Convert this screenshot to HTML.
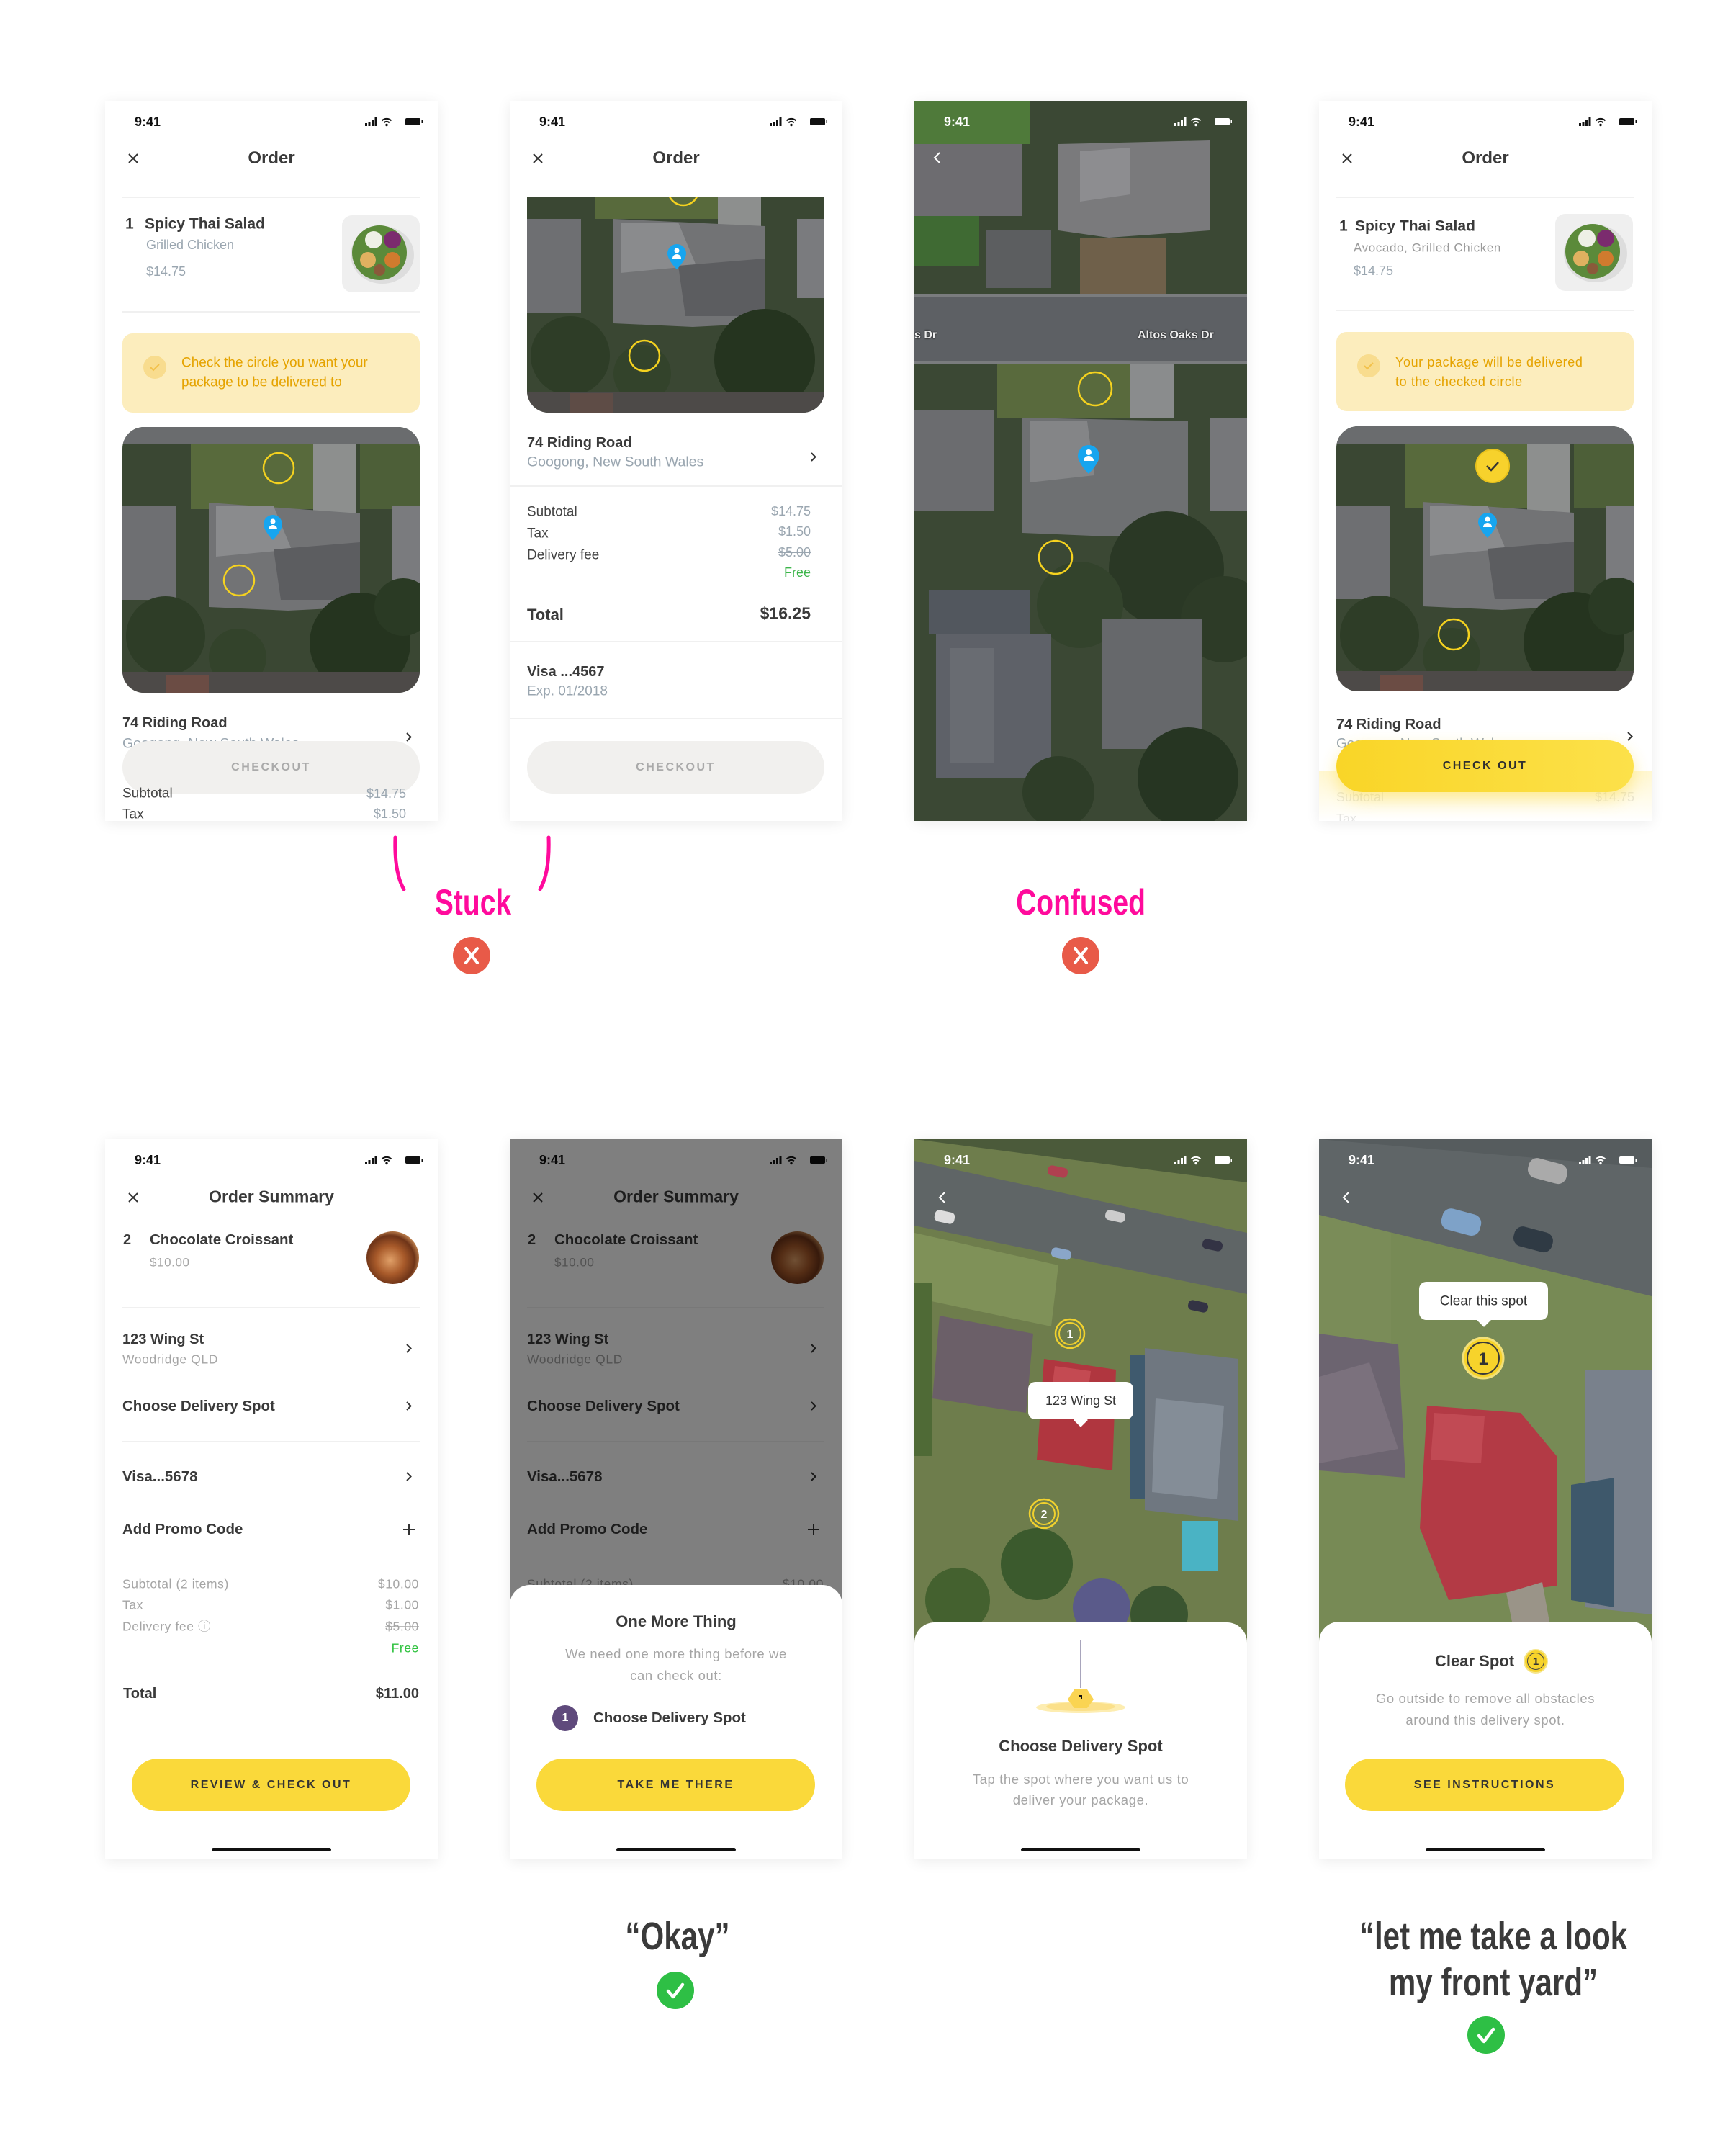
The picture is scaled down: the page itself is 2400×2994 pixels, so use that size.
<!DOCTYPE html>
<html><head><meta charset="utf-8">
<style>
*{margin:0;padding:0;box-sizing:border-box}
body{width:2400px;height:2994px;background:#fff;position:relative;overflow:hidden;font-family:"Liberation Sans",sans-serif;color:#333}
.ph{position:absolute;width:462px;height:1000px;background:#fff;overflow:hidden;box-shadow:0 3px 18px rgba(0,0,0,.08)}
.t{position:absolute;white-space:nowrap;transform:translateY(-50%);line-height:1}
.c{left:0;right:0;text-align:center}
.b{font-weight:bold}
.g2{letter-spacing:.6px}
.sep{position:absolute;height:2px;background:#f0f0f0}
.btn{position:absolute;border-radius:40px;display:flex;align-items:center;justify-content:center;font-weight:bold;letter-spacing:2.5px;font-size:16px}
.home{position:absolute;left:148px;width:166px;height:5px;border-radius:3px;background:#111;top:984px}
.abs{position:absolute}
.cap{position:absolute;font-weight:bold;white-space:nowrap;transform:translateX(-50%) scaleX(.78);line-height:1}
</style></head><body>

<!-- ============ PHONE 1 ============ -->
<div class="ph" style="left:146px;top:140px">
 <div class="t b" style="left:41px;top:29px;font-size:18px;color:#111">9:41</div>
 <svg class="abs" style="left:361px;top:21px" width="84" height="16" viewBox="0 0 84 16"><g fill="#111"><rect x="0" y="10" width="3" height="4"/><rect x="4.5" y="8" width="3" height="6"/><rect x="9" y="5" width="3" height="9"/><rect x="13.5" y="2" width="3" height="12"/><circle cx="30" cy="12.5" r="1.7"/><rect x="56" y="3" width="21" height="10" rx="2"/><rect x="78.5" y="6" width="1.5" height="4"/></g><g fill="none" stroke="#111" stroke-width="2"><path d="M23.5 6.5a9.5 9.5 0 0 1 13 0"/><path d="M26.2 9.4a5.5 5.5 0 0 1 7.6 0"/></g></svg>
 <svg class="abs" style="left:31px;top:72px" width="16" height="16"><path d="M2 2l12 12M14 2L2 14" stroke="#333" stroke-width="2"/></svg>
 <div class="t c b" style="top:80px;font-size:24px;color:#3a3a3a">Order</div>
 <div class="sep" style="left:24px;width:413px;top:133px"></div>
 <div class="t b" style="left:28px;top:171px;font-size:21px">1</div>
 <div class="t b" style="left:55px;top:171px;font-size:21px;color:#3a3a3a">Spicy Thai Salad</div>
 <div class="t" style="left:57px;top:200px;font-size:18px;color:#9aa6b0">Grilled Chicken</div>
 <div class="t" style="left:57px;top:237px;font-size:18px;color:#9aa6b0">$14.75</div>
 <div class="abs" style="left:329px;top:159px;width:108px;height:107px;border-radius:14px;background:#efefef">
  <svg width="108" height="107"><ellipse cx="56" cy="55" rx="44" ry="40" fill="#ddd"/><circle cx="52" cy="52" r="38" fill="#5b8a3a"/><circle cx="44" cy="34" r="12" fill="#eef0e6"/><circle cx="70" cy="34" r="12" fill="#7b2b6e"/><circle cx="36" cy="62" r="11" fill="#e0b160"/><circle cx="70" cy="62" r="11" fill="#d07b2e"/><circle cx="52" cy="76" r="8" fill="#8a5a3a"/></svg>
 </div>
 <div class="sep" style="left:24px;width:413px;top:292px"></div>
 <div class="abs" style="left:24px;top:323px;width:413px;height:110px;border-radius:14px;background:#fcedbd"></div>
 <div class="abs" style="left:53px;top:354px;width:32px;height:32px;border-radius:50%;background:#f8dc8e"></div>
 <svg class="abs" style="left:61px;top:364px" width="16" height="12"><path d="M2 6l4 4 8-8" stroke="#f2c14b" stroke-width="2" fill="none"/></svg>
 <div class="t" style="left:106px;top:364px;font-size:19px;color:#e5a300">Check the circle you want your</div>
 <div class="t" style="left:106px;top:391px;font-size:19px;color:#e5a300">package to be delivered to</div>
 <div class="abs" style="left:24px;top:453px;width:413px;height:369px;border-radius:30px;overflow:hidden">
  <svg width="413" height="369" viewBox="0 0 413 369"><rect width="413" height="369" fill="#3a4733"/><rect width="413" height="24" fill="#6a6c6e"/><rect x="95" y="24" width="170" height="90" fill="#586a3c"/><rect x="265" y="24" width="60" height="100" fill="#8d8f8e"/><rect x="330" y="24" width="83" height="90" fill="#4d5f38"/><rect x="0" y="110" width="75" height="130" fill="#6e6f72"/><polygon points="120,105 330,120 330,250 230,255 120,250" fill="#727375"/><polygon points="130,110 210,110 235,170 130,180" fill="#8a8b8d"/><polygon points="210,170 330,160 330,240 220,240" fill="#5c5d60"/><rect x="375" y="110" width="38" height="110" fill="#7a7b7e"/><circle cx="330" cy="300" r="70" fill="#25341f"/><circle cx="390" cy="250" r="40" fill="#2a3a24"/><circle cx="60" cy="290" r="55" fill="#2e3d27"/><circle cx="160" cy="320" r="40" fill="#33432b"/><rect x="0" y="340" width="413" height="29" fill="#4d4a48"/><rect x="60" y="345" width="60" height="24" fill="#6b4c44"/><circle cx="217" cy="57" r="21" fill="none" stroke="#f5d21f" stroke-width="2.5"/><circle cx="162" cy="213" r="21" fill="none" stroke="#f5d21f" stroke-width="2.5"/><path d="M209 157c0 0-13-13-13-22a13 13 0 0 1 26 0c0 9-13 22-13 22z" fill="#17a5ef"/><circle cx="209" cy="131" r="3.5" fill="#fff"/><path d="M203 142a6 6 0 0 1 12 0z" fill="#fff"/></svg>
 </div>
 <div class="t b" style="left:24px;top:864px;font-size:20px;color:#3a3a3a">74 Riding Road</div>
 <div class="t" style="left:24px;top:893px;font-size:19.5px;color:#9aa6b0">Googong, New South Wales</div>
 <svg class="abs" style="left:417px;top:876px" width="10" height="15"><path d="M2 2l5.5 5.5L2 13" stroke="#333" stroke-width="2" fill="none"/></svg>
 <div class="btn" style="left:24px;top:889px;width:413px;height:73px;background:#f1f0ee;color:#aaa">CHECKOUT</div>
 <div class="t" style="left:24px;top:962px;font-size:19px;color:#444">Subtotal</div>
 <div class="t" style="right:44px;top:962px;font-size:18px;color:#9aa6b0">$14.75</div>
 <div class="t" style="left:24px;top:991px;font-size:19px;color:#444">Tax</div>
 <div class="t" style="right:44px;top:990px;font-size:18px;color:#9aa6b0">$1.50</div>
</div>

<!-- ============ PHONE 2 ============ -->
<div class="ph" style="left:708px;top:140px">
 <div class="t b" style="left:41px;top:29px;font-size:18px;color:#111">9:41</div>
 <svg class="abs" style="left:361px;top:21px" width="84" height="16" viewBox="0 0 84 16"><g fill="#111"><rect x="0" y="10" width="3" height="4"/><rect x="4.5" y="8" width="3" height="6"/><rect x="9" y="5" width="3" height="9"/><rect x="13.5" y="2" width="3" height="12"/><circle cx="30" cy="12.5" r="1.7"/><rect x="56" y="3" width="21" height="10" rx="2"/><rect x="78.5" y="6" width="1.5" height="4"/></g><g fill="none" stroke="#111" stroke-width="2"><path d="M23.5 6.5a9.5 9.5 0 0 1 13 0"/><path d="M26.2 9.4a5.5 5.5 0 0 1 7.6 0"/></g></svg>
 <svg class="abs" style="left:31px;top:72px" width="16" height="16"><path d="M2 2l12 12M14 2L2 14" stroke="#333" stroke-width="2"/></svg>
 <div class="t c b" style="top:80px;font-size:24px;color:#3a3a3a">Order</div>
 <div class="abs" style="left:24px;top:134px;width:413px;height:299px;border-radius:0 0 30px 30px;overflow:hidden">
  <svg width="413" height="299" viewBox="0 0 413 299"><rect width="413" height="299" fill="#3a4733"/><rect x="95" y="0" width="170" height="30" fill="#586a3c"/><rect x="265" y="0" width="60" height="40" fill="#8d8f8e"/><rect x="0" y="30" width="75" height="130" fill="#6e6f72"/><polygon points="120,30 330,40 330,175 230,180 120,175" fill="#727375"/><polygon points="130,35 210,35 235,95 130,105" fill="#8a8b8d"/><polygon points="210,95 330,85 330,165 220,165" fill="#5c5d60"/><rect x="375" y="30" width="38" height="110" fill="#7a7b7e"/><circle cx="330" cy="225" r="70" fill="#25341f"/><circle cx="60" cy="220" r="55" fill="#2e3d27"/><circle cx="160" cy="245" r="40" fill="#33432b"/><rect x="0" y="270" width="413" height="29" fill="#4d4a48"/><rect x="60" y="272" width="60" height="27" fill="#5e4c46"/><circle cx="217" cy="-10" r="21" fill="none" stroke="#f5d21f" stroke-width="2.5"/><circle cx="163" cy="220" r="21" fill="none" stroke="#f5d21f" stroke-width="2.5"/><path d="M208 100c0 0-13-13-13-22a13 13 0 0 1 26 0c0 9-13 22-13 22z" fill="#17a5ef"/><circle cx="208" cy="74" r="3.5" fill="#fff"/><path d="M202 85a6 6 0 0 1 12 0z" fill="#fff"/></svg>
 </div>
 <div class="t b" style="left:24px;top:475px;font-size:20px;color:#3a3a3a">74 Riding Road</div>
 <div class="t" style="left:24px;top:502px;font-size:19.5px;color:#9aa6b0">Googong, New South Wales</div>
 <svg class="abs" style="left:417px;top:487px" width="10" height="15"><path d="M2 2l5.5 5.5L2 13" stroke="#333" stroke-width="2" fill="none"/></svg>
 <div class="sep" style="left:0;width:462px;top:534px"></div>
 <div class="t" style="left:24px;top:571px;font-size:19px;color:#444">Subtotal</div>
 <div class="t" style="left:24px;top:601px;font-size:19px;color:#444">Tax</div>
 <div class="t" style="left:24px;top:631px;font-size:19px;color:#444">Delivery fee</div>
 <div class="t" style="right:44px;top:570px;font-size:18px;color:#9aa6b0">$14.75</div>
 <div class="t" style="right:44px;top:598px;font-size:18px;color:#9aa6b0">$1.50</div>
 <div class="t" style="right:44px;top:627px;font-size:18px;color:#9aa6b0;text-decoration:line-through">$5.00</div>
 <div class="t" style="right:44px;top:655px;font-size:18px;color:#3cb54a">Free</div>
 <div class="t b" style="left:24px;top:714px;font-size:22px;color:#3a3a3a">Total</div>
 <div class="t b" style="right:44px;top:712px;font-size:23px;color:#3a3a3a">$16.25</div>
 <div class="sep" style="left:0;width:462px;top:750px"></div>
 <div class="t b" style="left:24px;top:793px;font-size:20px;color:#3a3a3a">Visa ...4567</div>
 <div class="t" style="left:24px;top:820px;font-size:19px;color:#9aa6b0">Exp. 01/2018</div>
 <div class="sep" style="left:0;width:462px;top:857px"></div>
 <div class="btn" style="left:24px;top:889px;width:413px;height:73px;background:#f1f0ee;color:#aaa">CHECKOUT</div>
</div>

<!-- ============ PHONE 3 ============ -->
<div class="ph" style="left:1270px;top:140px">
 <svg class="abs" style="left:0;top:0" width="462" height="1000" viewBox="0 0 462 1000"><rect width="462" height="1000" fill="#3b4834"/><rect x="0" y="0" width="160" height="60" fill="#4f7a3a"/><rect x="0" y="60" width="150" height="100" fill="#6d6c70"/><rect x="0" y="160" width="90" height="70" fill="#3f6a33"/><polygon points="200,60 410,55 410,180 270,190 200,180" fill="#7a7a7c"/><polygon points="230,70 300,65 300,130 230,140" fill="#8d8d90"/><rect x="230" y="190" width="120" height="80" fill="#6f604a"/><rect x="100" y="180" width="90" height="80" fill="#5c5e60"/><rect x="0" y="270" width="462" height="94" fill="#5d6064"/><rect x="0" y="268" width="462" height="4" fill="#7a7c7e"/><rect x="0" y="362" width="462" height="4" fill="#7a7c7e"/><rect x="115" y="366" width="185" height="75" fill="#596a3d"/><rect x="300" y="366" width="60" height="75" fill="#8a8c8d"/><rect x="0" y="430" width="110" height="140" fill="#6b6c6f"/><polygon points="150,440 380,445 380,600 270,605 150,600" fill="#6e7072"/><polygon points="160,445 240,445 250,520 160,530" fill="#848587"/><rect x="410" y="440" width="52" height="130" fill="#76777a"/><circle cx="350" cy="650" r="80" fill="#2a3825"/><circle cx="430" cy="720" r="60" fill="#2d3b27"/><circle cx="230" cy="700" r="60" fill="#33432c"/><rect x="20" y="680" width="140" height="60" fill="#52575e"/><rect x="30" y="740" width="160" height="200" fill="#5e6168"/><rect x="50" y="760" width="60" height="160" fill="#696c72"/><rect x="260" y="720" width="140" height="180" fill="#66686b"/><circle cx="380" cy="940" r="70" fill="#263522"/><circle cx="200" cy="960" r="50" fill="#2e3d28"/><circle cx="251" cy="400" r="23" fill="none" stroke="#f5d21f" stroke-width="2.5"/><circle cx="196" cy="634" r="23" fill="none" stroke="#f5d21f" stroke-width="2.5"/><path d="M242 518c0 0-15-15-15-25a15 15 0 0 1 30 0c0 10-15 25-15 25z" fill="#17a5ef"/><circle cx="242" cy="488" r="4" fill="#fff"/><path d="M235 500a7 7 0 0 1 14 0z" fill="#fff"/></svg>
 <div class="t b" style="left:310px;top:326px;font-size:16px;color:#eee;text-shadow:0 0 2px #000">Altos Oaks Dr</div>
 <div class="t b" style="left:0px;top:326px;font-size:16px;color:#eee;text-shadow:0 0 2px #000">s Dr</div>
 <div class="t b" style="left:41px;top:29px;font-size:18px;color:#fff">9:41</div>
 <svg class="abs" style="left:361px;top:21px" width="84" height="16" viewBox="0 0 84 16"><g fill="#fff"><rect x="0" y="10" width="3" height="4"/><rect x="4.5" y="8" width="3" height="6"/><rect x="9" y="5" width="3" height="9"/><rect x="13.5" y="2" width="3" height="12"/><circle cx="30" cy="12.5" r="1.7"/><rect x="56" y="3" width="21" height="10" rx="2"/><rect x="78.5" y="6" width="1.5" height="4"/></g><g fill="none" stroke="#fff" stroke-width="2"><path d="M23.5 6.5a9.5 9.5 0 0 1 13 0"/><path d="M26.2 9.4a5.5 5.5 0 0 1 7.6 0"/></g></svg>
 <svg class="abs" style="left:26px;top:70px" width="12" height="18"><path d="M9 2L2 9l7 7" stroke="#fff" stroke-width="2" fill="none"/></svg>
</div>

<!-- ============ PHONE 4 ============ -->
<div class="ph" style="left:1832px;top:140px">
 <div class="t b" style="left:41px;top:29px;font-size:18px;color:#111">9:41</div>
 <svg class="abs" style="left:361px;top:21px" width="84" height="16" viewBox="0 0 84 16"><g fill="#111"><rect x="0" y="10" width="3" height="4"/><rect x="4.5" y="8" width="3" height="6"/><rect x="9" y="5" width="3" height="9"/><rect x="13.5" y="2" width="3" height="12"/><circle cx="30" cy="12.5" r="1.7"/><rect x="56" y="3" width="21" height="10" rx="2"/><rect x="78.5" y="6" width="1.5" height="4"/></g><g fill="none" stroke="#111" stroke-width="2"><path d="M23.5 6.5a9.5 9.5 0 0 1 13 0"/><path d="M26.2 9.4a5.5 5.5 0 0 1 7.6 0"/></g></svg>
 <svg class="abs" style="left:31px;top:72px" width="16" height="16"><path d="M2 2l12 12M14 2L2 14" stroke="#333" stroke-width="2"/></svg>
 <div class="t c b" style="top:80px;font-size:24px;color:#3a3a3a">Order</div>
 <div class="sep" style="left:24px;width:413px;top:133px"></div>
 <div class="t b" style="left:28px;top:174px;font-size:21px">1</div>
 <div class="t b" style="left:50px;top:174px;font-size:21px;color:#3a3a3a">Spicy Thai Salad</div>
 <div class="t g2" style="left:48px;top:204px;font-size:17px;color:#9a9a9a">Avocado, Grilled Chicken</div>
 <div class="t" style="left:48px;top:236px;font-size:18px;color:#9aa6b0">$14.75</div>
 <div class="abs" style="left:328px;top:157px;width:108px;height:107px;border-radius:14px;background:#efefef">
  <svg width="108" height="107"><ellipse cx="56" cy="55" rx="44" ry="40" fill="#ddd"/><circle cx="52" cy="52" r="38" fill="#5b8a3a"/><circle cx="44" cy="34" r="12" fill="#eef0e6"/><circle cx="70" cy="34" r="12" fill="#7b2b6e"/><circle cx="36" cy="62" r="11" fill="#e0b160"/><circle cx="70" cy="62" r="11" fill="#d07b2e"/><circle cx="52" cy="76" r="8" fill="#8a5a3a"/></svg>
 </div>
 <div class="sep" style="left:24px;width:413px;top:290px"></div>
 <div class="abs" style="left:24px;top:321px;width:413px;height:110px;border-radius:14px;background:#fcedbd"></div>
 <div class="abs" style="left:53px;top:352px;width:32px;height:32px;border-radius:50%;background:#f8dc8e"></div>
 <svg class="abs" style="left:61px;top:362px" width="16" height="12"><path d="M2 6l4 4 8-8" stroke="#f2c14b" stroke-width="2" fill="none"/></svg>
 <div class="t g2" style="left:106px;top:363px;font-size:18px;color:#e5a300">Your package will be delivered</div>
 <div class="t g2" style="left:106px;top:390px;font-size:18px;color:#e5a300">to the checked circle</div>
 <div class="abs" style="left:24px;top:452px;width:413px;height:368px;border-radius:30px;overflow:hidden">
  <svg width="413" height="369" viewBox="0 0 413 369"><rect width="413" height="369" fill="#3a4733"/><rect width="413" height="24" fill="#6a6c6e"/><rect x="95" y="24" width="170" height="90" fill="#586a3c"/><rect x="265" y="24" width="60" height="100" fill="#8d8f8e"/><rect x="330" y="24" width="83" height="90" fill="#4d5f38"/><rect x="0" y="110" width="75" height="130" fill="#6e6f72"/><polygon points="120,105 330,120 330,250 230,255 120,250" fill="#727375"/><polygon points="130,110 210,110 235,170 130,180" fill="#8a8b8d"/><polygon points="210,170 330,160 330,240 220,240" fill="#5c5d60"/><rect x="375" y="110" width="38" height="110" fill="#7a7b7e"/><circle cx="330" cy="300" r="70" fill="#25341f"/><circle cx="390" cy="250" r="40" fill="#2a3a24"/><circle cx="60" cy="290" r="55" fill="#2e3d27"/><circle cx="160" cy="320" r="40" fill="#33432b"/><rect x="0" y="340" width="413" height="29" fill="#4d4a48"/><rect x="60" y="345" width="60" height="24" fill="#6b4c44"/><circle cx="217" cy="55" r="23" fill="#f7d22c" stroke="#e9c21c" stroke-width="2"/><path d="M209 55l6 6 10-11" stroke="#333" stroke-width="2.5" fill="none"/><circle cx="163" cy="289" r="21" fill="none" stroke="#f5d21f" stroke-width="2.5"/><path d="M210 155c0 0-13-13-13-22a13 13 0 0 1 26 0c0 9-13 22-13 22z" fill="#17a5ef"/><circle cx="210" cy="129" r="3.5" fill="#fff"/><path d="M204 140a6 6 0 0 1 12 0z" fill="#fff"/></svg>
 </div>
 <div class="t b" style="left:24px;top:866px;font-size:20px;color:#3a3a3a">74 Riding Road</div>
 <div class="t" style="left:24px;top:893px;font-size:19px;color:#9aa6b0">Googong, New South Wales</div>
 <svg class="abs" style="left:427px;top:875px" width="10" height="15"><path d="M2 2l5.5 5.5L2 13" stroke="#333" stroke-width="2" fill="none"/></svg>
 <div class="t" style="left:24px;top:967px;font-size:18px;color:#ddd">Subtotal</div>
 <div class="t" style="right:24px;top:967px;font-size:18px;color:#ddd">$14.75</div>
 <div class="t" style="left:24px;top:997px;font-size:18px;color:#ddd">Tax</div>
 <div class="abs" style="left:0;top:930px;width:462px;height:70px;background:linear-gradient(rgba(255,240,170,.55),rgba(255,255,255,.2))"></div>
 <div class="btn" style="left:24px;top:888px;width:413px;height:72px;background:linear-gradient(90deg,#f9d527,#fce14a);color:#2f2f2f;box-shadow:0 10px 22px rgba(250,215,50,.45)">CHECK OUT</div>
</div>

<!-- ============ PHONE 5 ============ -->
<div class="ph" style="left:146px;top:1582px">
 <div class="t b" style="left:41px;top:29px;font-size:18px;color:#111">9:41</div>
 <svg class="abs" style="left:361px;top:21px" width="84" height="16" viewBox="0 0 84 16"><g fill="#111"><rect x="0" y="10" width="3" height="4"/><rect x="4.5" y="8" width="3" height="6"/><rect x="9" y="5" width="3" height="9"/><rect x="13.5" y="2" width="3" height="12"/><circle cx="30" cy="12.5" r="1.7"/><rect x="56" y="3" width="21" height="10" rx="2"/><rect x="78.5" y="6" width="1.5" height="4"/></g><g fill="none" stroke="#111" stroke-width="2"><path d="M23.5 6.5a9.5 9.5 0 0 1 13 0"/><path d="M26.2 9.4a5.5 5.5 0 0 1 7.6 0"/></g></svg>
 <svg class="abs" style="left:31px;top:73px" width="16" height="16"><path d="M2 2l12 12M14 2L2 14" stroke="#333" stroke-width="2"/></svg>
 <div class="t c b" style="top:80px;font-size:23px;color:#3a3a3a">Order Summary</div>
 <div class="t b" style="left:25px;top:140px;font-size:20px;color:#3a3a3a">2</div>
 <div class="t b" style="left:62px;top:140px;font-size:20.5px;color:#3a3a3a">Chocolate Croissant</div>
 <div class="t g2" style="left:62px;top:171px;font-size:17px;color:#a5a5a5">$10.00</div>
 <div class="abs" style="left:363px;top:128px;width:73px;height:73px;border-radius:50%;background:radial-gradient(circle at 45% 55%,#e0a068 0%,#a85a2a 35%,#6e3418 60%,#c98b55 75%,#eee 100%)"></div>
 <div class="sep" style="left:24px;width:413px;top:233px"></div>
 <div class="t b" style="left:24px;top:278px;font-size:20px;color:#3a3a3a">123 Wing St</div>
 <div class="t g2" style="left:24px;top:306px;font-size:17.5px;color:#a5a5a5">Woodridge QLD</div>
 <svg class="abs" style="left:417px;top:283px" width="10" height="15"><path d="M2 2l5.5 5.5L2 13" stroke="#333" stroke-width="2" fill="none"/></svg>
 <div class="t b" style="left:24px;top:371px;font-size:20.5px;color:#3a3a3a">Choose Delivery Spot</div>
 <svg class="abs" style="left:417px;top:363px" width="10" height="15"><path d="M2 2l5.5 5.5L2 13" stroke="#333" stroke-width="2" fill="none"/></svg>
 <div class="sep" style="left:24px;width:413px;top:419px"></div>
 <div class="t b" style="left:24px;top:469px;font-size:20.5px;color:#3a3a3a">Visa...5678</div>
 <svg class="abs" style="left:417px;top:461px" width="10" height="15"><path d="M2 2l5.5 5.5L2 13" stroke="#333" stroke-width="2" fill="none"/></svg>
 <div class="t b" style="left:24px;top:542px;font-size:20.5px;color:#3a3a3a">Add Promo Code</div>
 <svg class="abs" style="left:413px;top:533px" width="18" height="18"><path d="M9 1v16M1 9h16" stroke="#333" stroke-width="2"/></svg>
 <div class="t g2" style="left:24px;top:618px;font-size:17.5px;color:#a5a5a5">Subtotal (2 items)</div>
 <div class="t g2" style="left:24px;top:647px;font-size:17.5px;color:#a5a5a5">Tax</div>
 <div class="t g2" style="left:24px;top:677px;font-size:17.5px;color:#a5a5a5">Delivery fee ⓘ</div>
 <div class="t g2" style="right:26px;top:618px;font-size:17.5px;color:#a5a5a5">$10.00</div>
 <div class="t g2" style="right:26px;top:647px;font-size:17.5px;color:#a5a5a5">$1.00</div>
 <div class="t g2" style="right:26px;top:677px;font-size:17.5px;color:#a5a5a5;text-decoration:line-through">$5.00</div>
 <div class="t g2" style="right:26px;top:707px;font-size:17.5px;color:#2fc23f">Free</div>
 <div class="t b" style="left:25px;top:770px;font-size:20px;color:#3a3a3a">Total</div>
 <div class="t b" style="right:26px;top:770px;font-size:20px;color:#3a3a3a">$11.00</div>
 <div class="btn" style="left:37px;top:860px;width:387px;height:73px;background:#fad93a;color:#333">REVIEW &amp; CHECK OUT</div>
 <div class="home"></div>
</div>

<!-- ============ PHONE 6 ============ -->
<div class="ph" style="left:708px;top:1582px">
 <div class="t b" style="left:41px;top:29px;font-size:18px;color:#111">9:41</div>
 <svg class="abs" style="left:361px;top:21px" width="84" height="16" viewBox="0 0 84 16"><g fill="#111"><rect x="0" y="10" width="3" height="4"/><rect x="4.5" y="8" width="3" height="6"/><rect x="9" y="5" width="3" height="9"/><rect x="13.5" y="2" width="3" height="12"/><circle cx="30" cy="12.5" r="1.7"/><rect x="56" y="3" width="21" height="10" rx="2"/><rect x="78.5" y="6" width="1.5" height="4"/></g><g fill="none" stroke="#111" stroke-width="2"><path d="M23.5 6.5a9.5 9.5 0 0 1 13 0"/><path d="M26.2 9.4a5.5 5.5 0 0 1 7.6 0"/></g></svg>
 <svg class="abs" style="left:31px;top:73px" width="16" height="16"><path d="M2 2l12 12M14 2L2 14" stroke="#333" stroke-width="2"/></svg>
 <div class="t c b" style="top:80px;font-size:23px;color:#3a3a3a">Order Summary</div>
 <div class="t b" style="left:25px;top:140px;font-size:20px;color:#3a3a3a">2</div>
 <div class="t b" style="left:62px;top:140px;font-size:20.5px;color:#3a3a3a">Chocolate Croissant</div>
 <div class="t g2" style="left:62px;top:171px;font-size:17px;color:#a5a5a5">$10.00</div>
 <div class="abs" style="left:363px;top:128px;width:73px;height:73px;border-radius:50%;background:radial-gradient(circle at 45% 55%,#e0a068 0%,#a85a2a 35%,#6e3418 60%,#c98b55 75%,#eee 100%)"></div>
 <div class="sep" style="left:24px;width:413px;top:233px"></div>
 <div class="t b" style="left:24px;top:278px;font-size:20px;color:#3a3a3a">123 Wing St</div>
 <div class="t g2" style="left:24px;top:306px;font-size:17.5px;color:#a5a5a5">Woodridge QLD</div>
 <svg class="abs" style="left:417px;top:283px" width="10" height="15"><path d="M2 2l5.5 5.5L2 13" stroke="#333" stroke-width="2" fill="none"/></svg>
 <div class="t b" style="left:24px;top:371px;font-size:20.5px;color:#3a3a3a">Choose Delivery Spot</div>
 <svg class="abs" style="left:417px;top:363px" width="10" height="15"><path d="M2 2l5.5 5.5L2 13" stroke="#333" stroke-width="2" fill="none"/></svg>
 <div class="sep" style="left:24px;width:413px;top:419px"></div>
 <div class="t b" style="left:24px;top:469px;font-size:20.5px;color:#3a3a3a">Visa...5678</div>
 <svg class="abs" style="left:417px;top:461px" width="10" height="15"><path d="M2 2l5.5 5.5L2 13" stroke="#333" stroke-width="2" fill="none"/></svg>
 <div class="t b" style="left:24px;top:542px;font-size:20.5px;color:#3a3a3a">Add Promo Code</div>
 <svg class="abs" style="left:413px;top:533px" width="18" height="18"><path d="M9 1v16M1 9h16" stroke="#333" stroke-width="2"/></svg>
 <div class="t g2" style="left:24px;top:618px;font-size:17.5px;color:#a5a5a5">Subtotal (2 items)</div>
 <div class="t g2" style="right:26px;top:618px;font-size:17.5px;color:#a5a5a5">$10.00</div>
 <div class="abs" style="left:0;top:0;width:462px;height:1000px;background:rgba(0,0,0,.5)"></div>
 <div class="abs" style="left:0;top:619px;width:462px;height:381px;background:#fff;border-radius:28px 28px 0 0"></div>
 <div class="t c b" style="top:670px;font-size:22px;color:#3a3a3a">One More Thing</div>
 <div class="t c g2" style="top:715px;font-size:18.5px;color:#a5a5a5">We need one more thing before we</div>
 <div class="t c g2" style="top:745px;font-size:18.5px;color:#a5a5a5">can check out:</div>
 <div class="abs" style="left:59px;top:786px;width:36px;height:36px;border-radius:50%;background:#5f4a7c;color:#fff;font-weight:bold;font-size:16px;display:flex;align-items:center;justify-content:center">1</div>
 <div class="t b" style="left:116px;top:804px;font-size:20.5px;color:#3a3a3a">Choose Delivery Spot</div>
 <div class="btn" style="left:37px;top:860px;width:387px;height:73px;background:#fad93a;color:#333">TAKE ME THERE</div>
 <div class="home"></div>
</div>

<!-- ============ PHONE 7 ============ -->
<div class="ph" style="left:1270px;top:1582px">
 <svg class="abs" style="left:0;top:0" width="462" height="700" viewBox="0 0 462 700"><rect width="462" height="700" fill="#6e7d4c"/><polygon points="0,0 462,0 462,60 0,0" fill="#4b5a3a"/><polygon points="0,30 462,130 462,215 0,120" fill="#5f6566"/><rect x="28" y="100" width="28" height="16" rx="6" fill="#ddd" transform="rotate(12 42 108)"/><rect x="185" y="38" width="28" height="14" rx="6" fill="#b04050" transform="rotate(12 199 45)"/><rect x="190" y="152" width="28" height="14" rx="6" fill="#8aa6c8" transform="rotate(12 204 159)"/><rect x="265" y="100" width="28" height="14" rx="6" fill="#ccc" transform="rotate(12 279 107)"/><rect x="400" y="140" width="28" height="14" rx="6" fill="#334" transform="rotate(12 414 147)"/><rect x="380" y="225" width="28" height="14" rx="6" fill="#334" transform="rotate(12 394 232)"/><polygon points="0,130 200,175 190,260 0,220" fill="#7f9158"/><polygon points="35,245 165,270 155,380 25,360" fill="#6b5f68"/><polygon points="180,305 280,320 275,460 170,445" fill="#b0363f"/><polygon points="195,315 245,322 240,360 190,355" fill="#c44a52"/><polygon points="320,290 450,305 450,530 320,515" fill="#6f7780"/><polygon points="335,360 430,370 420,500 330,490" fill="#848d97"/><rect x="300" y="300" width="20" height="200" fill="#3f5a6e"/><rect x="372" y="530" width="50" height="70" fill="#4ab3c4"/><circle cx="170" cy="590" r="50" fill="#3b5a2d"/><circle cx="60" cy="640" r="45" fill="#44612f"/><circle cx="260" cy="650" r="40" fill="#5a5a8a"/><circle cx="340" cy="660" r="40" fill="#3a5530"/><rect x="0" y="200" width="25" height="240" fill="#4f6a36"/><circle cx="216" cy="270" r="20" fill="none" stroke="#f1d12e" stroke-width="2.5"/><circle cx="216" cy="270" r="15" fill="none" stroke="#f1d12e" stroke-width="2"/><text x="216" y="276" text-anchor="middle" font-family="Liberation Sans" font-weight="bold" font-size="16" fill="#fff">1</text><circle cx="180" cy="520" r="20" fill="none" stroke="#f1d12e" stroke-width="2.5"/><circle cx="180" cy="520" r="15" fill="none" stroke="#f1d12e" stroke-width="2"/><text x="180" y="526" text-anchor="middle" font-family="Liberation Sans" font-weight="bold" font-size="16" fill="#fff">2</text></svg>
 <div class="abs" style="left:158px;top:337px;width:146px;height:52px;background:#fff;border-radius:10px"></div>
 <div class="abs" style="left:224px;top:383px;width:14px;height:14px;background:#fff;transform:rotate(45deg)"></div>
 <div class="t c" style="left:158px;right:auto;width:146px;top:363px;font-size:18px;color:#333">123 Wing St</div>
 <div class="t b" style="left:41px;top:29px;font-size:18px;color:#fff">9:41</div>
 <svg class="abs" style="left:361px;top:21px" width="84" height="16" viewBox="0 0 84 16"><g fill="#fff"><rect x="0" y="10" width="3" height="4"/><rect x="4.5" y="8" width="3" height="6"/><rect x="9" y="5" width="3" height="9"/><rect x="13.5" y="2" width="3" height="12"/><circle cx="30" cy="12.5" r="1.7"/><rect x="56" y="3" width="21" height="10" rx="2"/><rect x="78.5" y="6" width="1.5" height="4"/></g><g fill="none" stroke="#fff" stroke-width="2"><path d="M23.5 6.5a9.5 9.5 0 0 1 13 0"/><path d="M26.2 9.4a5.5 5.5 0 0 1 7.6 0"/></g></svg>
 <svg class="abs" style="left:33px;top:72px" width="12" height="18"><path d="M9 2L2 9l7 7" stroke="#fff" stroke-width="2" fill="none"/></svg>
 <div class="abs" style="left:0;top:671px;width:462px;height:329px;background:#fff;border-radius:28px 28px 0 0"></div>
 <svg class="abs" style="left:160px;top:690px" width="142" height="115" viewBox="0 0 142 115"><line x1="71" y1="6" x2="71" y2="72" stroke="#8b87a6" stroke-width="1.5"/><ellipse cx="71" cy="99" rx="62" ry="8" fill="#fdedb1"/><ellipse cx="71" cy="98" rx="48" ry="6" fill="#fbe08a"/><polygon points="62,74 80,74 89,88 80,100 62,100 53,88" fill="#fad452"/><path d="M68 83h4v5" stroke="#111" stroke-width="2" fill="none"/></svg>
 <div class="t c b" style="top:843px;font-size:22px;color:#3a3a3a">Choose Delivery Spot</div>
 <div class="t c g2" style="top:889px;font-size:18.5px;color:#a5a5a5">Tap the spot where you want us to</div>
 <div class="t c g2" style="top:918px;font-size:18.5px;color:#a5a5a5">deliver your package.</div>
 <div class="home"></div>
</div>

<!-- ============ PHONE 8 ============ -->
<div class="ph" style="left:1832px;top:1582px">
 <svg class="abs" style="left:0;top:0" width="462" height="700" viewBox="0 0 462 700"><rect width="462" height="700" fill="#778a55"/><polygon points="0,0 462,0 462,218 0,105" fill="#5f6567"/><polygon points="0,0 462,0 462,40 0,0" fill="#565c5e"/><rect x="170" y="100" width="55" height="30" rx="12" fill="#7ea2c8" transform="rotate(15 197 115)"/><rect x="270" y="125" width="55" height="28" rx="12" fill="#2f3a44" transform="rotate(15 297 139)"/><rect x="290" y="30" width="55" height="28" rx="12" fill="#aaa" transform="rotate(15 317 44)"/><polygon points="0,105 100,130 100,300 0,290" fill="#7a8c58"/><polygon points="0,270 110,285 120,470 0,460" fill="#6c6470"/><polygon points="0,330 70,310 110,430 0,450" fill="#7b717d"/><polygon points="150,370 280,380 330,440 330,620 180,640 140,540" fill="#b33a45"/><polygon points="160,380 230,385 225,450 155,445" fill="#c14a54"/><polygon points="370,320 462,320 462,660 370,650" fill="#79818c"/><polygon points="350,480 410,470 410,650 350,640" fill="#3e586b"/><polygon points="260,630 310,615 320,670 270,680" fill="#9a9488"/><circle cx="228" cy="304" r="28" fill="#f7d32b" stroke="#f1e07a" stroke-width="3"/><circle cx="228" cy="304" r="22" fill="none" stroke="#3a3a3a" stroke-width="2"/><text x="228" y="313" text-anchor="middle" font-family="Liberation Sans" font-weight="bold" font-size="24" fill="#333">1</text></svg>
 <div class="abs" style="left:139px;top:198px;width:179px;height:53px;background:#fff;border-radius:10px"></div>
 <div class="abs" style="left:222px;top:244px;width:14px;height:14px;background:#fff;transform:rotate(45deg)"></div>
 <div class="t c" style="left:139px;right:auto;width:179px;top:225px;font-size:19px;color:#333">Clear this spot</div>
 <div class="t b" style="left:41px;top:29px;font-size:18px;color:#fff">9:41</div>
 <svg class="abs" style="left:361px;top:21px" width="84" height="16" viewBox="0 0 84 16"><g fill="#fff"><rect x="0" y="10" width="3" height="4"/><rect x="4.5" y="8" width="3" height="6"/><rect x="9" y="5" width="3" height="9"/><rect x="13.5" y="2" width="3" height="12"/><circle cx="30" cy="12.5" r="1.7"/><rect x="56" y="3" width="21" height="10" rx="2"/><rect x="78.5" y="6" width="1.5" height="4"/></g><g fill="none" stroke="#fff" stroke-width="2"><path d="M23.5 6.5a9.5 9.5 0 0 1 13 0"/><path d="M26.2 9.4a5.5 5.5 0 0 1 7.6 0"/></g></svg>
 <svg class="abs" style="left:32px;top:72px" width="12" height="18"><path d="M9 2L2 9l7 7" stroke="#fff" stroke-width="2" fill="none"/></svg>
 <div class="abs" style="left:0;top:670px;width:462px;height:330px;background:#fff;border-radius:28px 28px 0 0"></div>
 <div class="t b" style="left:161px;top:725px;font-size:22px;color:#3a3a3a">Clear Spot</div>
 <div class="abs" style="left:284px;top:708px;width:34px;height:34px;border-radius:50%;background:#f7d32b;border:2px solid #f6e58a;display:flex;align-items:center;justify-content:center;font-weight:bold;font-size:15px;color:#333"><span style="border:1.5px solid #444;border-radius:50%;width:24px;height:24px;display:flex;align-items:center;justify-content:center">1</span></div>
 <div class="t c g2" style="top:777px;font-size:18.5px;color:#a5a5a5">Go outside to remove all obstacles</div>
 <div class="t c g2" style="top:807px;font-size:18.5px;color:#a5a5a5">around this delivery spot.</div>
 <div class="btn" style="left:36px;top:860px;width:388px;height:73px;background:#fad93a;color:#333">SEE INSTRUCTIONS</div>
 <div class="home"></div>
</div>

<!-- ============ CAPTIONS ============ -->
<svg class="abs" style="left:540px;top:1158px" width="240" height="84"><path d="M9 5c-1 30 2 55 12 72" stroke="#ff0a9c" stroke-width="5" fill="none" stroke-linecap="round"/><path d="M222 5c1 30-2 55-12 72" stroke="#ff0a9c" stroke-width="5" fill="none" stroke-linecap="round"/></svg>
<div class="cap" style="left:657px;top:1228px;font-size:50px;color:#ff0a9c">Stuck</div>
<div class="cap" style="left:1501px;top:1228px;font-size:50px;color:#ff0a9c">Confused</div>
<svg class="abs" style="left:629px;top:1301px" width="52" height="52"><circle cx="26" cy="26" r="26" fill="#e85a48"/><path d="M18 16l16 20M34 16L18 36" stroke="#fff" stroke-width="4" stroke-linecap="round"/></svg>
<svg class="abs" style="left:1475px;top:1301px" width="52" height="52"><circle cx="26" cy="26" r="26" fill="#e85a48"/><path d="M18 16l16 20M34 16L18 36" stroke="#fff" stroke-width="4" stroke-linecap="round"/></svg>

<div class="cap" style="left:941px;top:2662px;font-size:54px;color:#3a3a3a">“Okay”</div>
<svg class="abs" style="left:912px;top:2738px" width="52" height="52"><circle cx="26" cy="26" r="26" fill="#2ebf45"/><path d="M16 27l7 8 13-17" stroke="#fff" stroke-width="4.5" fill="none" stroke-linecap="round" stroke-linejoin="round"/></svg>
<div class="cap" style="left:2074px;top:2662px;font-size:54px;color:#3a3a3a">“let me take a look</div>
<div class="cap" style="left:2074px;top:2726px;font-size:54px;color:#3a3a3a">my front yard”</div>
<svg class="abs" style="left:2038px;top:2800px" width="52" height="52"><circle cx="26" cy="26" r="26" fill="#2ebf45"/><path d="M16 27l7 8 13-17" stroke="#fff" stroke-width="4.5" fill="none" stroke-linecap="round" stroke-linejoin="round"/></svg>
</body></html>
